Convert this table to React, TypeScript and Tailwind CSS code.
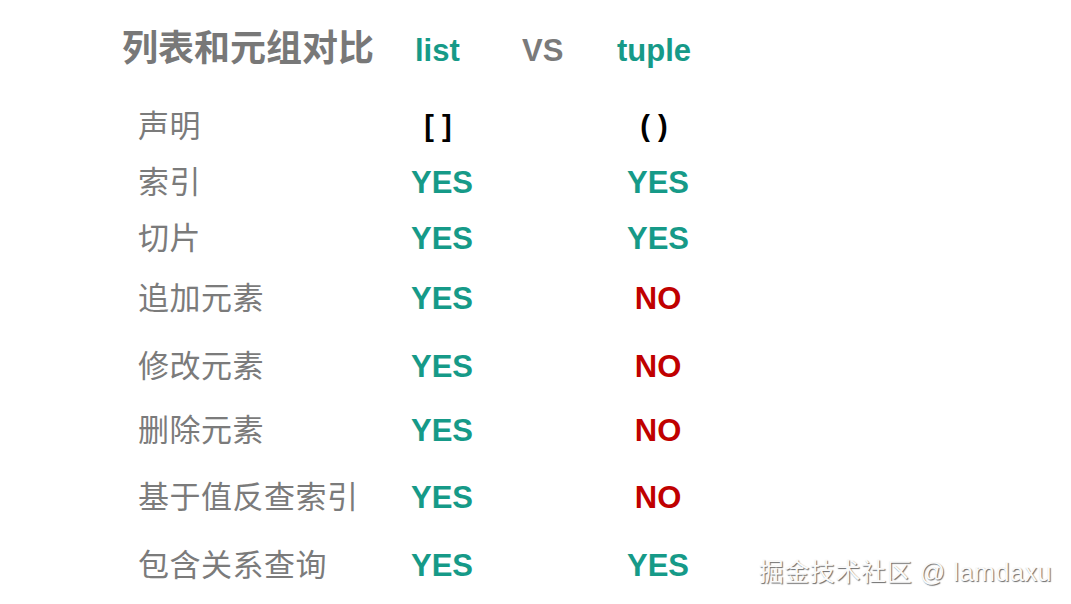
const rows = [
  { label: '声明', list: '[ ]', tuple: '( )', h: 'h-[56px]', bracket: true },
  { label: '索引', list: 'YES', tuple: 'YES', h: 'h-[56px]' },
  { label: '切片', list: 'YES', tuple: 'YES', h: 'h-[56px]' },
  { label: '追加元素', list: 'YES', tuple: 'NO', h: 'h-[64px]' },
  { label: '修改元素', list: 'YES', tuple: 'NO', h: 'h-[72px]' },
  { label: '删除元素', list: 'YES', tuple: 'NO', h: 'h-[56px]' },
  { label: '基于值反查索引', list: 'YES', tuple: 'NO', h: 'h-[78px]' },
  { label: '包含关系查询', list: 'YES', tuple: 'YES', h: 'h-[58px]' },
];

function Cell({ value, bracket }: { value: string; bracket?: boolean }) {
  if (bracket) {
    return <span className="mr-[8px] text-[29px] font-bold text-black">{value}</span>;
  }
  const color = value === 'NO' ? 'text-[#c00000]' : 'text-[#169a88]';
  return <span className={`text-[31px] font-bold ${color}`}>{value}</span>;
}

export default function App() {
  return (
    <div
      className="relative w-[1071px] h-[604px] bg-white overflow-hidden"
      style={{ fontFamily: '"Liberation Sans", "Noto Sans CJK SC", sans-serif' }}
    >
      <div className="flex items-baseline pl-[122px] pt-[28px] h-[98px]">
        <h1 className="text-[36px] font-bold text-[#787878] leading-none w-[293px]">列表和元组对比</h1>
        <span className="text-[31px] font-bold text-[#169a88] w-[107px]">list</span>
        <span className="text-[31px] font-bold text-[#7a7a7a] w-[95px]">VS</span>
        <span className="text-[31px] font-bold text-[#169a88]">tuple</span>
      </div>

      <div className="flex flex-col pl-[138px]">
        {rows.map((r) => (
          <div key={r.label} className={`flex items-center ${r.h}`}>
            <div className="w-[254px] text-[31px] tracking-[0.5px] text-[#7b7b7b] leading-none">{r.label}</div>
            <div className="w-[100px] text-center leading-none">
              <Cell value={r.list} bracket={r.bracket} />
            </div>
            <div className="ml-[116px] w-[100px] text-center leading-none">
              <Cell value={r.tuple} bracket={r.bracket} />
            </div>
          </div>
        ))}
      </div>

      <div className="absolute right-[19px] bottom-[19px] text-[25px] tracking-[0.6px] text-[#fafafa] leading-none [text-shadow:1px_1px_1px_#6b6b6b]">
        掘金技术社区 @ lamdaxu
      </div>
    </div>
  );
}
